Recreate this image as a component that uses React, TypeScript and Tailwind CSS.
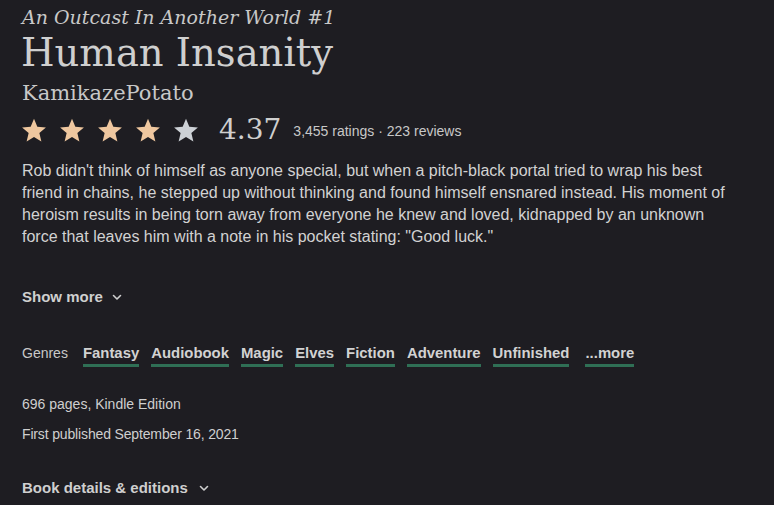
import React from "react";

const Star = ({ fill }: { fill: string }) => (
  <svg width="26" height="26" viewBox="0 0 24 24" aria-hidden="true">
    <path
      fill={fill}
      d="M12 1.6l3.06 7.36 7.94.64-6.05 5.18 1.85 7.76L12 18.4l-6.8 4.14 1.85-7.76L1 9.6l7.94-.64z"
    />
  </svg>
);

const Chevron = () => (
  <svg width="12" height="12" viewBox="0 0 12 12" aria-hidden="true">
    <path d="M2.5 4.5L6 8l3.5-3.5" fill="none" stroke="currentColor" strokeWidth="1.6" strokeLinecap="round" strokeLinejoin="round" />
  </svg>
);

const genres = ["Fantasy", "Audiobook", "Magic", "Elves", "Fiction", "Adventure", "Unfinished", "...more"];

export default function App() {
  const serif = { fontFamily: '"DejaVu Serif", "Liberation Serif", serif' };
  return (
    <div
      className="w-[774px] h-[505px] overflow-hidden bg-[#1e1d22] text-[#d6d6d6] pl-[22px] pr-[20px]"
      style={{ fontFamily: '"Liberation Sans", Arial, sans-serif' }}
    >
      <div className="pt-[4px] italic text-[19px] leading-[26px] text-[#c8c8c8]" style={serif}>
        An Outcast In Another World #1
      </div>
      <h1 className="text-[38.5px] leading-[46px] text-[#cfcfcf] -ml-[1px]" style={serif}>
        Human Insanity
      </h1>
      <div className="text-[21px] leading-[30px] text-[#c8c8c8] mt-[2px]" style={serif}>
        KamikazePotato
      </div>
      <div className="flex items-center mt-[6px] h-[32px]">
        <div className="flex gap-[12px] -ml-[1px]">
          <Star fill="#efc79f" />
          <Star fill="#efc79f" />
          <Star fill="#efc79f" />
          <Star fill="#efc79f" />
          <Star fill="#cdd1d6" />
        </div>
        <div className="ml-[20px] text-[28px] leading-[32px] text-[#cfcfcf]" style={serif}>
          4.37
        </div>
        <div className="ml-[12px] text-[14px] text-[#c8c8c8] mt-[3px]">3,455 ratings · 223 reviews</div>
      </div>
      <p className="mt-[14px] text-[16px] leading-[22px] text-[#d2d2d2] w-[718px]">
        Rob didn't think of himself as anyone special, but when a pitch-black portal tried to wrap his best
        friend in chains, he stepped up without thinking and found himself ensnared instead. His moment of
        heroism results in being torn away from everyone he knew and loved, kidnapped by an unknown force
        that leaves him with a note in his pocket stating: "Good luck."
      </p>
      <div className="mt-[38px] flex items-center gap-[8px] font-bold text-[15px] text-[#cfcfcf]">
        Show more <Chevron />
      </div>
      <div className="mt-[33px] flex items-baseline">
        <span className="text-[14px] text-[#c8c8c8] mr-[15px]">Genres</span>
        <div className="flex gap-[12px]">
          {genres.map((g) => (
            <span
              key={g}
              className={`font-bold text-[14.9px] text-[#d2d2d2] border-b-[3px] border-[#2f6f55] pb-0 ${g === "...more" ? "ml-[4px]" : ""}`}
            >
              {g}
            </span>
          ))}
        </div>
      </div>
      <div className="mt-[27px] text-[14px] leading-[20px] text-[#cfcfcf]">696 pages, Kindle Edition</div>
      <div className="mt-[10px] text-[14px] leading-[20px] text-[#cfcfcf] tracking-[-0.15px]">First published September 16, 2021</div>
      <div className="mt-[33px] flex items-center gap-[10px] font-bold text-[15px] text-[#cfcfcf]">
        Book details &amp; editions <Chevron />
      </div>
    </div>
  );
}
